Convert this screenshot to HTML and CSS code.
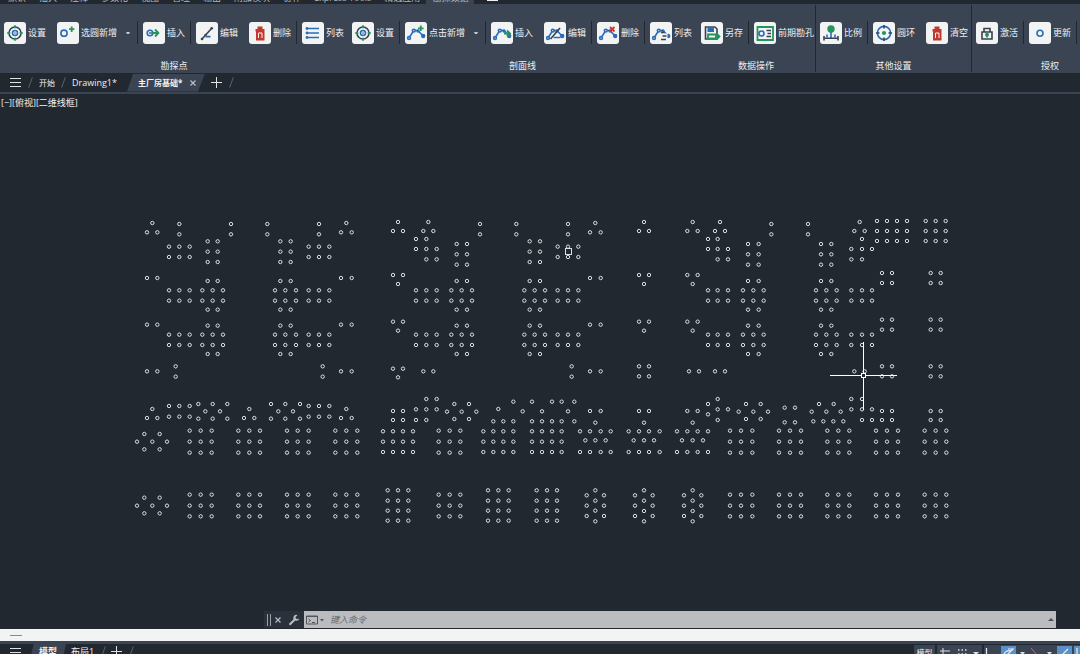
FILE: index.html
```
<!DOCTYPE html>
<html lang="zh-CN">
<head>
<meta charset="utf-8">
<title>主厂房基础</title>
<link rel="stylesheet" href="styles.css">
</head>
<body>
<svg class="defs" aria-hidden="true">
  <defs>
    <symbol id="i-set" viewBox="0 0 22 22"><circle cx="11" cy="11" r="6" class="k"/><path class="g" d="M11 3.3v3M11 15.7v3M3.3 11h3M15.7 11h3"/><circle cx="11" cy="11" r="2.5" class="b"/><circle cx="11" cy="11" r=".8" class="bf"/></symbol>
    <symbol id="i-add" viewBox="0 0 22 22"><circle cx="7" cy="11.2" r="3.1" class="b"/><path class="g" d="M14.7 4.5v5.4M12 7.2h5.4"/></symbol>
    <symbol id="i-ins" viewBox="0 0 22 22"><circle cx="7" cy="11" r="2.8" class="b"/><path class="b" d="M6 11h4"/><path class="g" d="M9 11h6M12 7.5l3.4 3.5-3.4 3.5"/></symbol>
    <symbol id="i-edit" viewBox="0 0 22 22"><path class="k" d="M6 17l9.5-10.5"/><circle cx="6" cy="17" r="1.3" class="kf"/><circle cx="9.500" cy="13" r="1.2" class="kf"/><circle cx="15.7" cy="6.3" r="1.3" class="kf"/><path class="b" d="M9.5 14.6h5"/></symbol>
    <symbol id="i-del" viewBox="0 0 22 22"><path class="rf" d="M8.500 4.500h5v2.500h2V9.500h-9V7h2zM7 9h8.500v9.500H7z"/><path class="w" d="M9.500 16v-5h3.500v5"/></symbol>
    <symbol id="i-list" viewBox="0 0 22 22"><path class="b" d="M5 6.500h12M5 11h12M5 15.500h12"/><circle cx="5" cy="6.500" r="1.400" class="bf"/><circle cx="5" cy="11" r="1.400" class="bf"/><circle cx="5" cy="15.500" r="1.400" class="bf"/></symbol>
    <symbol id="poly" viewBox="0 0 22 22"><path class="b" d="M4 16l4.700-7.500h4.300l5 5.500"/><circle cx="4" cy="16" r="2.200" class="bf"/><circle cx="8.800" cy="8.600" r="2.200" class="bf"/><circle cx="13" cy="9" r="1.700" class="bf"/><circle cx="18.200" cy="14" r="2.200" class="bf"/><circle cx="4" cy="16" r=".6" class="wf"/><circle cx="8.800" cy="8.600" r=".6" class="wf"/></symbol>
    <symbol id="i-padd" viewBox="0 0 22 22"><use href="#poly"/><path class="g" d="M15.800 3.500v5.600M13 6.300h5.600"/></symbol>
    <symbol id="i-pins" viewBox="0 0 22 22"><use href="#poly"/><path class="g" d="M13 11.500h5M16 8.500l3 3-3 3"/></symbol>
    <symbol id="i-pedit" viewBox="0 0 22 22"><use href="#poly"/><path class="k" d="M6.500 17l9.500-11"/><path class="b" d="M9.500 15.500h7"/></symbol>
    <symbol id="i-pdel" viewBox="0 0 22 22"><use href="#poly"/><path class="r" d="M13 5l4.500 4.500M17.500 5L13 9.500"/></symbol>
    <symbol id="i-plist" viewBox="0 0 22 22"><use href="#poly"/><path class="wf" d="M11 11.500h6.500V19H11z"/><path class="k" d="M11 10.500h3.500M12.500 14h4M11 17.500h5"/></symbol>
    <symbol id="i-save" viewBox="0 0 22 22"><path class="k" d="M4.500 5h9.500l2 2v10H4.500z"/><path class="bf" d="M6.500 5h6.500v5H6.500z"/><path class="g" d="M7 12.500h8v4H7zM14.500 14.500h3M16 12l2.500 2.500L16 17"/></symbol>
    <symbol id="i-hole" viewBox="0 0 22 22"><path class="g" d="M3.500 5h15.500v13H3.500z"/><circle cx="7.500" cy="11.500" r="2.500" class="b"/><path class="k" d="M12.500 8.500h4.500M13.500 11.500H17M12.500 14.500H17"/></symbol>
    <symbol id="i-scale" viewBox="0 0 22 22"><circle cx="11" cy="7" r="3.700" class="gf"/><path class="b" d="M11 10v6M7 12.500v3M15 12.500v3"/><path class="k" d="M4 14v4.500M18 14v4.500M4 16.300h14"/></symbol>
    <symbol id="i-ring" viewBox="0 0 22 22"><circle cx="11" cy="11" r="6.600" class="b"/><path class="k" d="M11 3v3.500M11 15.500V19M3 11h3.500M15.500 11H19"/><circle cx="11" cy="11" r="2.100" class="gf"/></symbol>
    <symbol id="i-lock" viewBox="0 0 22 22"><path class="k" d="M6 10h10v7H6zM8 10V6.500h6V10"/><circle cx="11" cy="12.800" r="2" class="gf"/><path class="g" d="M11 12v3.500"/></symbol>
    <symbol id="i-upd" viewBox="0 0 22 22"><circle cx="11" cy="11.300" r="3" class="b"/></symbol>
  </defs>
</svg>

<nav class="menu">
  <a href="#">默认</a><a href="#">插入</a><a href="#">注释</a><a href="#">参数化</a><a href="#">视图</a><a href="#">管理</a><a href="#">输出</a><a href="#">附加模块</a><a href="#">协作</a><a href="#">Express Tools</a><a href="#">精选应用</a><a href="#" class="on">勘探数据</a><i class="menu-box"></i>
</nav>

<header class="ribbon">
  <section class="group g1">
    <div class="tools">
      <button class="tool"><svg><use href="#i-set"/></svg>设置</button>
      <button class="tool split"><svg><use href="#i-add"/></svg>选圆新增<i class="caret"></i></button>
      <button class="tool sep"><svg><use href="#i-ins"/></svg>插入</button>
      <button class="tool sep"><svg><use href="#i-edit"/></svg>编辑</button>
      <button class="tool"><svg><use href="#i-del"/></svg>删除</button>
      <button class="tool sep"><svg><use href="#i-list"/></svg>列表</button>
    </div>
    <h2>勘探点</h2>
  </section>
  <section class="group g2">
    <div class="tools">
      <button class="tool"><svg><use href="#i-set"/></svg>设置</button>
      <button class="tool split sep"><svg><use href="#i-padd"/></svg>点击新增<i class="caret"></i></button>
      <button class="tool sep"><svg><use href="#i-pins"/></svg>插入</button>
      <button class="tool"><svg><use href="#i-pedit"/></svg>编辑</button>
      <button class="tool sep"><svg><use href="#i-pdel"/></svg>删除</button>
      <button class="tool sep"><svg><use href="#i-plist"/></svg>列表</button>
    </div>
    <h2>剖面线</h2>
  </section>
  <section class="group g3">
    <div class="tools">
      <button class="tool"><svg><use href="#i-save"/></svg>另存</button>
      <button class="tool wide sep"><svg><use href="#i-hole"/></svg>前期勘孔</button>
    </div>
    <h2>数据操作</h2>
  </section>
  <section class="group g4 line">
    <div class="tools">
      <button class="tool"><svg><use href="#i-scale"/></svg>比例</button>
      <button class="tool sep"><svg><use href="#i-ring"/></svg>圆环</button>
      <button class="tool"><svg><use href="#i-del"/></svg>清空</button>
    </div>
    <h2>其他设置</h2>
  </section>
  <section class="group g5 line">
    <div class="tools">
      <button class="tool"><svg><use href="#i-lock"/></svg>激活</button>
      <button class="tool sep"><svg><use href="#i-upd"/></svg>更新</button>
      <span class="tool sep"></span>
    </div>
    <h2>授权</h2>
  </section>
</header>

<nav class="files">
  <button class="burger" aria-label="菜单"></button>
  <i class="slash"></i>
  <a href="#" class="start">开始</a>
  <i class="slash"></i>
  <a href="#" class="drawing">Drawing1*</a>
  <span class="file-on"><a href="#">主厂房基础*</a><button class="x" aria-label="关闭"><svg viewBox="0 0 6 6"><path d="M.5 .5l5 5M5.500 .5l-5 5"/></svg></button></span>
  <button class="plus" aria-label="新建"></button>
  <i class="slash"></i>
</nav>

<main class="canvas">
  <p class="view">[−][俯视][二维线框]</p>
  <svg class="plan" id="plan" aria-label="勘探点平面图"></svg>
  <div class="command">
    <i class="grip"></i>
    <button class="x" aria-label="关闭"><svg viewBox="0 0 6 6"><path d="M.5 .5l5 5M5.500 .5l-5 5"/></svg></button>
    <button class="wrench" aria-label="自定义"><svg viewBox="0 0 12 12"><path d="M1.500 10.800L6.500 5.800" stroke="#b9bcc1" stroke-width="2.200"/><path d="M9.500 1A3 3 0 1 0 11.300 4.500L9 5.300 7.300 3.600z" fill="#b9bcc1"/></svg></button>
    <label class="entry">
      <svg viewBox="0 0 18 10"><path d="M.5 1h11v8H.5z" fill="none" stroke="#50545b"/><path d="M.5 1.500h11M2.500 4l2 1.500-2 1.500M6 7.500h3" fill="none" stroke="#50545b"/><path d="M14 4h4l-2 2.500z" fill="#50545b"/></svg>
      <input type="text" placeholder="键入命令" aria-label="键入命令">
      <i class="up"></i>
    </label>
  </div>
</main>

<div class="strip"><i></i></div>

<footer class="status">
  <button class="burger" aria-label="布局菜单"></button>
  <a href="#" class="model">模型</a>
  <a href="#" class="layout">布局1</a>
  <i class="slash"></i>
  <button class="plus" aria-label="新建布局"></button>
  <i class="slash"></i>
  <div class="modes">
    <button class="mode-text">模型</button>
    <svg class="mode-grid" viewBox="0 0 45 10"><path d="M3 6h10M6 3v7" stroke="#dfe2e6" fill="none"/><path d="M21 5h9M21 9h9" stroke="#dfe2e6" stroke-width="1.500" stroke-dasharray="1.500 2" fill="none"/><path d="M36 7h6l-3 3z" fill="#dfe2e6"/></svg>
    <svg class="mode-snap" viewBox="0 0 96 10"><path d="M17 1h15v9H17zM73 1h15v9H73zM90 1h6v9h-6z" fill="#5b8fc7"/><path d="M2.500 3v7M20 10a5 5 0 0 1 7-4M23 10l6-6M24 4h6M78 10l6-6M93 3v7" stroke="#eceff2" fill="none" stroke-width="1.200"/><path d="M47 3l6 7" stroke="#d4626a"/><path d="M36 7h5l-2.500 3zM63 7h5l-2.500 3z" fill="#dfe2e6"/></svg>
  </div>
</footer>
<script src="plan.js"></script>
</body>
</html>
```
FILE: styles.css
```
* { box-sizing: border-box; }
body {
  margin: 0;
  min-height: 100vh;
  display: flex;
  flex-direction: column;
  overflow: hidden;
  background: #222830;
  color: #eef0f2;
  font: 9px/12px "Open Sans", "Noto Sans CJK SC", sans-serif;
}
a { color: inherit; text-decoration: none; white-space: nowrap; }
button { border: 0; padding: 0; background: none; color: inherit; font: inherit; }
.defs { position: absolute; width: 0; height: 0; }
.k, .b, .g, .r, .w { fill: none; stroke-width: 1.6; }
.k { stroke: #39424f; } .kf { fill: #39424f; }
.b { stroke: #2b6cb8; } .bf { fill: #2b6cb8; }
.g { stroke: #24945a; stroke-width: 1.8; } .gf { fill: #24945a; }
.r { stroke: #c2382f; stroke-width: 1.8; } .rf { fill: #c2382f; }
.w { stroke: #f2f4f4; stroke-width: 1; } .wf { fill: #f2f4f4; }

.menu { display: flex; align-items: flex-end; height: 4px; padding-left: 8px; gap: 13px; overflow: hidden; color: #b5b9bf; }
.menu a { line-height: 12px; }
.menu .on { background: #3b4453; padding: 0 6px; margin-left: -7px; }
.menu-box { width: 11px; height: 4px; border-bottom: 3px solid #222830; background: #eef0f2; }

.ribbon { display: flex; background: #3b4453; height: 69px; padding: 1px 0; }
.group { display: flex; flex-direction: column; justify-content: space-between; flex: none; }
.g1 { width: 348px; } .g2 { width: 349px; } .g3 { width: 118px; } .g4 { width: 156px; } .g5 { width: 157px; }
.line { border-left: 1px solid #222830; }
.group h2 { margin: 0; font: inherit; text-align: center; }
.tools { display: flex; padding-top: 16px; }
.tool { display: flex; align-items: center; gap: 2px; flex: none; width: 53px; height: 23px; padding-left: 5px; border-left: 1px solid transparent; white-space: nowrap; }
.tool:first-child { width: 51px; padding-left: 3px; }
.split { width: 86px; }
.wide { width: 66px; }
.sep { border-left-color: #222830; }
.tool svg { flex: none; width: 22px; height: 22px; border-radius: 3px; background: #f2f4f4; }
.caret { width: 4px; border-top: 2px solid #c6cad0; border-left: 1px solid transparent; border-right: 1px solid transparent; margin-left: 7px; }

.files { display: flex; align-items: center; height: 21px; border-bottom: 2px solid #3b4453; background: #222830; padding-left: 10px; }
.burger { flex: none; width: 11px; height: 9px; border-top: 1px solid #dfe2e6; border-bottom: 1px solid #dfe2e6; background: linear-gradient(#dfe2e6, #dfe2e6) center / 100% 1px no-repeat; }
.slash { flex: none; width: 1px; height: 11px; background: #566070; transform: rotate(20deg); }
.files .slash { margin: 0 8px 0 9px; }
.start { margin-right: -1px; font-size: 8px; }
.file-on { display: flex; align-items: center; justify-content: space-between; width: 78px; height: 18px; margin-left: 10px; padding: 0 9px 0 11px; background: #3b4453; clip-path: polygon(8% 0, 100% 0, 91% 100%, 0 100%); font-size: 8px; font-weight: bold; }
.x { width: 6px; height: 6px; line-height: 0; }
.x svg { width: 6px; height: 6px; fill: none; stroke: #b9bcc1; stroke-width: 1.2; }
.plus { flex: none; width: 11px; height: 11px; margin-left: 6px; background: linear-gradient(#dfe2e6, #dfe2e6) center / 100% 1px no-repeat, linear-gradient(#dfe2e6, #dfe2e6) center / 1px 100% no-repeat; }

.canvas { position: relative; display: flex; flex: 1; min-height: 0; }
.view { position: absolute; margin: 0; left: 1px; top: 3px; }
.plan { flex: 1; align-self: stretch; height: auto; fill: none; stroke: #dcdfe2; }
.command { position: absolute; left: 264px; right: 24px; bottom: 1px; height: 17px; display: flex; align-items: center; background: #2b313b; }
.grip { width: 4px; height: 12px; margin: 0 4px 0 3px; border: solid #9da1a8; border-width: 0 1px; }
.wrench { width: 12px; height: 12px; margin: 0 4px 0 7px; line-height: 0; }
.wrench svg { width: 12px; height: 12px; fill: none; }
.entry { flex: 1; align-self: stretch; display: flex; align-items: center; gap: 6px; padding: 0 2px; background: #bbbcc0; }
.entry svg { width: 18px; height: 10px; }
.entry input { flex: 1; border: 0; padding: 0; outline: 0; background: none; color: #333840; font: italic 9px/12px "Noto Sans CJK SC", sans-serif; }
.entry input::placeholder { color: #666a71; }
.up { border: 3px solid transparent; border-top: 0; border-bottom-color: #4b4f56; }

.strip { height: 12px; background: #f2f4f4; padding: 6px 10px; }
.strip i { display: block; width: 12px; height: 1px; background: #85898f; }
.status { display: flex; align-items: flex-start; height: 13px; border-top: 3px solid #3b4453; padding-left: 10px; overflow: hidden; background: #222830; }
.status .burger { margin-top: 4px; }
.status .plus { margin: 2px 9px 0 7px; }
.status .slash { margin-top: 2px; }
.model { margin-left: 9px; padding: 2px 9px; background: #3b4453; clip-path: polygon(10% 0, 100% 0, 90% 100%, 0 100%); font-weight: bold; }
.layout { padding: 2px 9px 0 5px; }
.modes { display: flex; gap: 2px; margin-left: auto; padding-top: 1px; }
.mode-text { width: 21px; height: 15px; background: #3b4453; font-size: 8px; }
.modes svg { height: 10px; background: #3b4453; }
.mode-grid { width: 45px; }
.mode-snap { width: 96px; }
```
FILE: plan.js
```
// Survey points by sheet. Each row is [y, x, x, ...] in thirds of a pixel from the sheet origin.
const sheets = [
  { x: 120, y: 116, rows: [
    [39,97,679],[67,81,112,663,695],[42,178,333,442,597],[73,178,333,442,597],
    [94,263,293,481,512],[125,263,293,481,512],[156,263,293,481,512],
    [110,147,178,209,566,597,628],[141,147,178,209,566,597,628],
    [204,81,112,663,695],[213,263,293,481,512],
    [241,147,178,209,247,278,309,465,496,528,566,597,628],[272,147,178,209,247,278,309,465,496,528,566,597,628],
    [299,263,293,481,512],[344,81,112,663,695],[347,263,293,481,512],
    [374,147,178,209,247,278,309,465,496,528,566,597,628],[405,147,178,209,247,278,309,465,496,528,566,597,628],
    [432,263,293,481,512],[469,167,608],[500,167,608],[484,81,112,663,695] ] },
  { x: 370, y: 116, rows: [
    [36,84,175],[63,69,99,160,190],[42,330,439,594],[73,330,439,594],[39,676],[67,660,692],
    [87,138,169],[117,138,169,200],[148,169,200],[102,260,291],[133,260,291],[164,260,291],
    [94,479,510],[125,479,510],[156,479,510],[110,563,594,625],[141,563,594,625],
    [195,69,99],[222,84],[204,660,692],[213,260,291,479,510],
    [241,138,169,200,244,275,306,463,494,525,563,594,625],[272,138,169,200,244,275,306,463,494,525,563,594,625],
    [299,260,291,479,510],[335,69,99],[362,84],[344,660,692],[347,260,291,479,510],
    [374,138,169,200,244,275,306,463,494,525,563,594,625],[405,138,169,200,244,275,306,463,494,525,563,594,625],
    [432,260,291,479,510],[476,69,99],[502,84],[484,160,190,660,692],[469,605],[500,605] ] },
  { x: 620, y: 116, rows: [
    [36,72,218,300,719],[63,57,87,202,233,285,315,703,734],[42,454,564],[73,454,564],
    [33,771,801,831,861,917,947,977],[63,771,801,831,861,917,947,977],[93,771,801,831,861,917,947,977],
    [87,264,293,726],[117,264,293,324,694,726,756],[148,293,324,694,726],
    [102,384,416,603,634],[133,384,416,603,634],[164,384,416,603,634],
    [195,57,87,202,233],[222,72,218],[189,786,816,932,962],[219,786,816,932,962],[213,384,416,603,634],
    [241,264,293,324,369,400,431,588,619,650,694,726,756],[272,264,293,324,369,400,431,588,619,650,694,726,756],
    [299,384,416,603,634],[335,57,87,202,233],[362,72,218],[329,786,816,932,962],[359,786,816,932,962],
    [347,384,416,603,634],[374,264,293,324,369,400,431,588,619,650,694,726,756],
    [405,264,293,324,369,400,431,588,619,650,694,726,756],[432,384,416,603,634],
    [469,57,87,786,816,932,962],[499,57,87,786,816,932,962],[484,207,237,285,315,703,734] ] },
  { x: 120, y: 266, rows: [
    [147,97,388,679],[174,81,112,372,403,663,695],[138,147,178,209,566,597,628],[170,147,178,209,566,597,628],
    [132,235,278,322,453,496,540],[154,256,300,475,519],[176,235,278,322,453,496,540],
    [222,73,119],[245,51,97,141],[268,73,119],[413,73,119],[437,51,97,141],[460,73,119],
    ...[212,245,278,404,437,469].map(y => [y,209,242,275,355,388,420,501,533,566,646,679,712]) ] },
  { x: 370, y: 266, rows: [
    [117,169,200],[148,138,169,200],[153,69,99,660,692],[180,69,99,138,169],
    [132,253,297],[155,231,275,319],[177,253,297],[147,385],[125,430,486,546,575,613],[154,458,516,594],
    [184,370,400,430,486,516,546,575,613],[188,676],
    ...[214,245,276].map(y => [y,39,69,99,129,340,370,400,430,486,516,546,575]),
    [214,630,660,692,722],[241,646,676,707],[276,630,660,692,722],
    ...[212,245,278,404,437,469].map(y => [y,206,239,271]),
    ...[391,422,452,482].map(y => [y,53,84,115,354,385,416,500,531,561]),
    [391,676],[406,650,702],[422,676],[437,650,702],[452,676],[468,650,702],[484,676] ] },
  { x: 620, y: 266, rows: [
    [153,57,87,202,233,786,816,932,962],[188,72,218],[132,264],[163,264],[117,293,694,726],[148,293,324,694,726,756],[180,293,726,756,786,816,932,962],
    [132,378,422,597,641],[155,356,400,444,575,619,662],[177,378,422],[143,494,525],[187,494,525],[184,580,610,640,670],
    [214,26,57,87,119,171,202,233,264],[241,41,72,102,186,218,249],[276,26,57,87,119,171,202,233,264],
    ...[212,245,278,404,437,469].map(y => [y,330,363,397,477,510,543,622,655,688,768,801,834,914,947,979]),
    [391,72,218],[406,45,98,192,244],[422,72,218],[437,45,98,192,244],[453,72,218],[468,45,98,192,244],[484,72,218] ] }
];

const plan = document.getElementById("plan");
const ns = plan.namespaceURI;
function add(name, attrs) {
  const el = document.createElementNS(ns, name);
  for (const key in attrs) el.setAttribute(key, attrs[key]);
  plan.appendChild(el);
}
for (const { x, y, rows } of sheets)
  for (const [py, ...xs] of rows)
    for (const px of xs)
      add("circle", { cx: x + px / 3, cy: y + py / 3, r: 1.7 });

// Crosshair cursor and the small pick marker
add("path", { d: "M830 281.5h31M866 281.5h31M863.5 248v31M863.5 284v32", stroke: "#fff" });
add("rect", { x: 861.5, y: 279.5, width: 4, height: 4, stroke: "#fff" });
add("rect", { x: 565.5, y: 154.5, width: 6, height: 6 });
```
